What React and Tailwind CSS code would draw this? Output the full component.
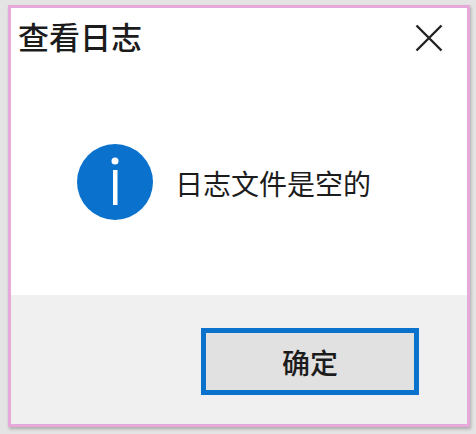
import React from "react";

const cjk = "font-['Noto_Sans_CJK_SC','Liberation_Sans',sans-serif]";

export default function App() {
  return (
    <div className={`w-[476px] h-[434px] bg-[#e4e4e4] pt-[5px] pl-[8px] overflow-hidden ${cjk}`}>
      <div className="w-[462px] h-[422px] flex flex-col bg-white border-[3px] border-[#e6a9d9] shadow-[1px_2px_3px_rgba(0,0,0,0.25)]">
        <div className="flex justify-between items-start h-[110px] pl-[7px] pr-[24px]">
          <h1 className="mt-[6px] text-[31px] leading-[44px] font-medium text-[#1c1c1c]">查看日志</h1>
          <svg className="mt-[16px]" width="28" height="28" viewBox="0 0 28 28" fill="none" stroke="#222222" strokeWidth="2.4">
            <path d="M1.5 1.5 26.5 26.5M26.5 1.5 1.5 26.5" />
          </svg>
        </div>
        <div className="flex items-center h-[177px] pl-[65px] pb-[50px] gap-[21px]">
          <svg width="78" height="78" viewBox="0 0 78 78">
            <circle cx="39" cy="39" r="38" fill="#0a72cc" />
            <circle cx="39" cy="18" r="3.5" fill="#ffffff" />
            <rect x="37" y="27" width="4.5" height="35" fill="#ffffff" />
          </svg>
          <p className="mt-[2px] text-[28px] leading-[40px] text-[#1c1c1c]">日志文件是空的</p>
        </div>
        <div className="flex-1 flex justify-end items-start bg-[#f0f0f0] pt-[33px] pr-[48px]">
          <button className="w-[218px] h-[67px] border-[5px] border-[#0a72cc] bg-[#e1e1e1] text-[28px] leading-none font-medium text-[#1c1c1c]">
            确定
          </button>
        </div>
      </div>
    </div>
  );
}
